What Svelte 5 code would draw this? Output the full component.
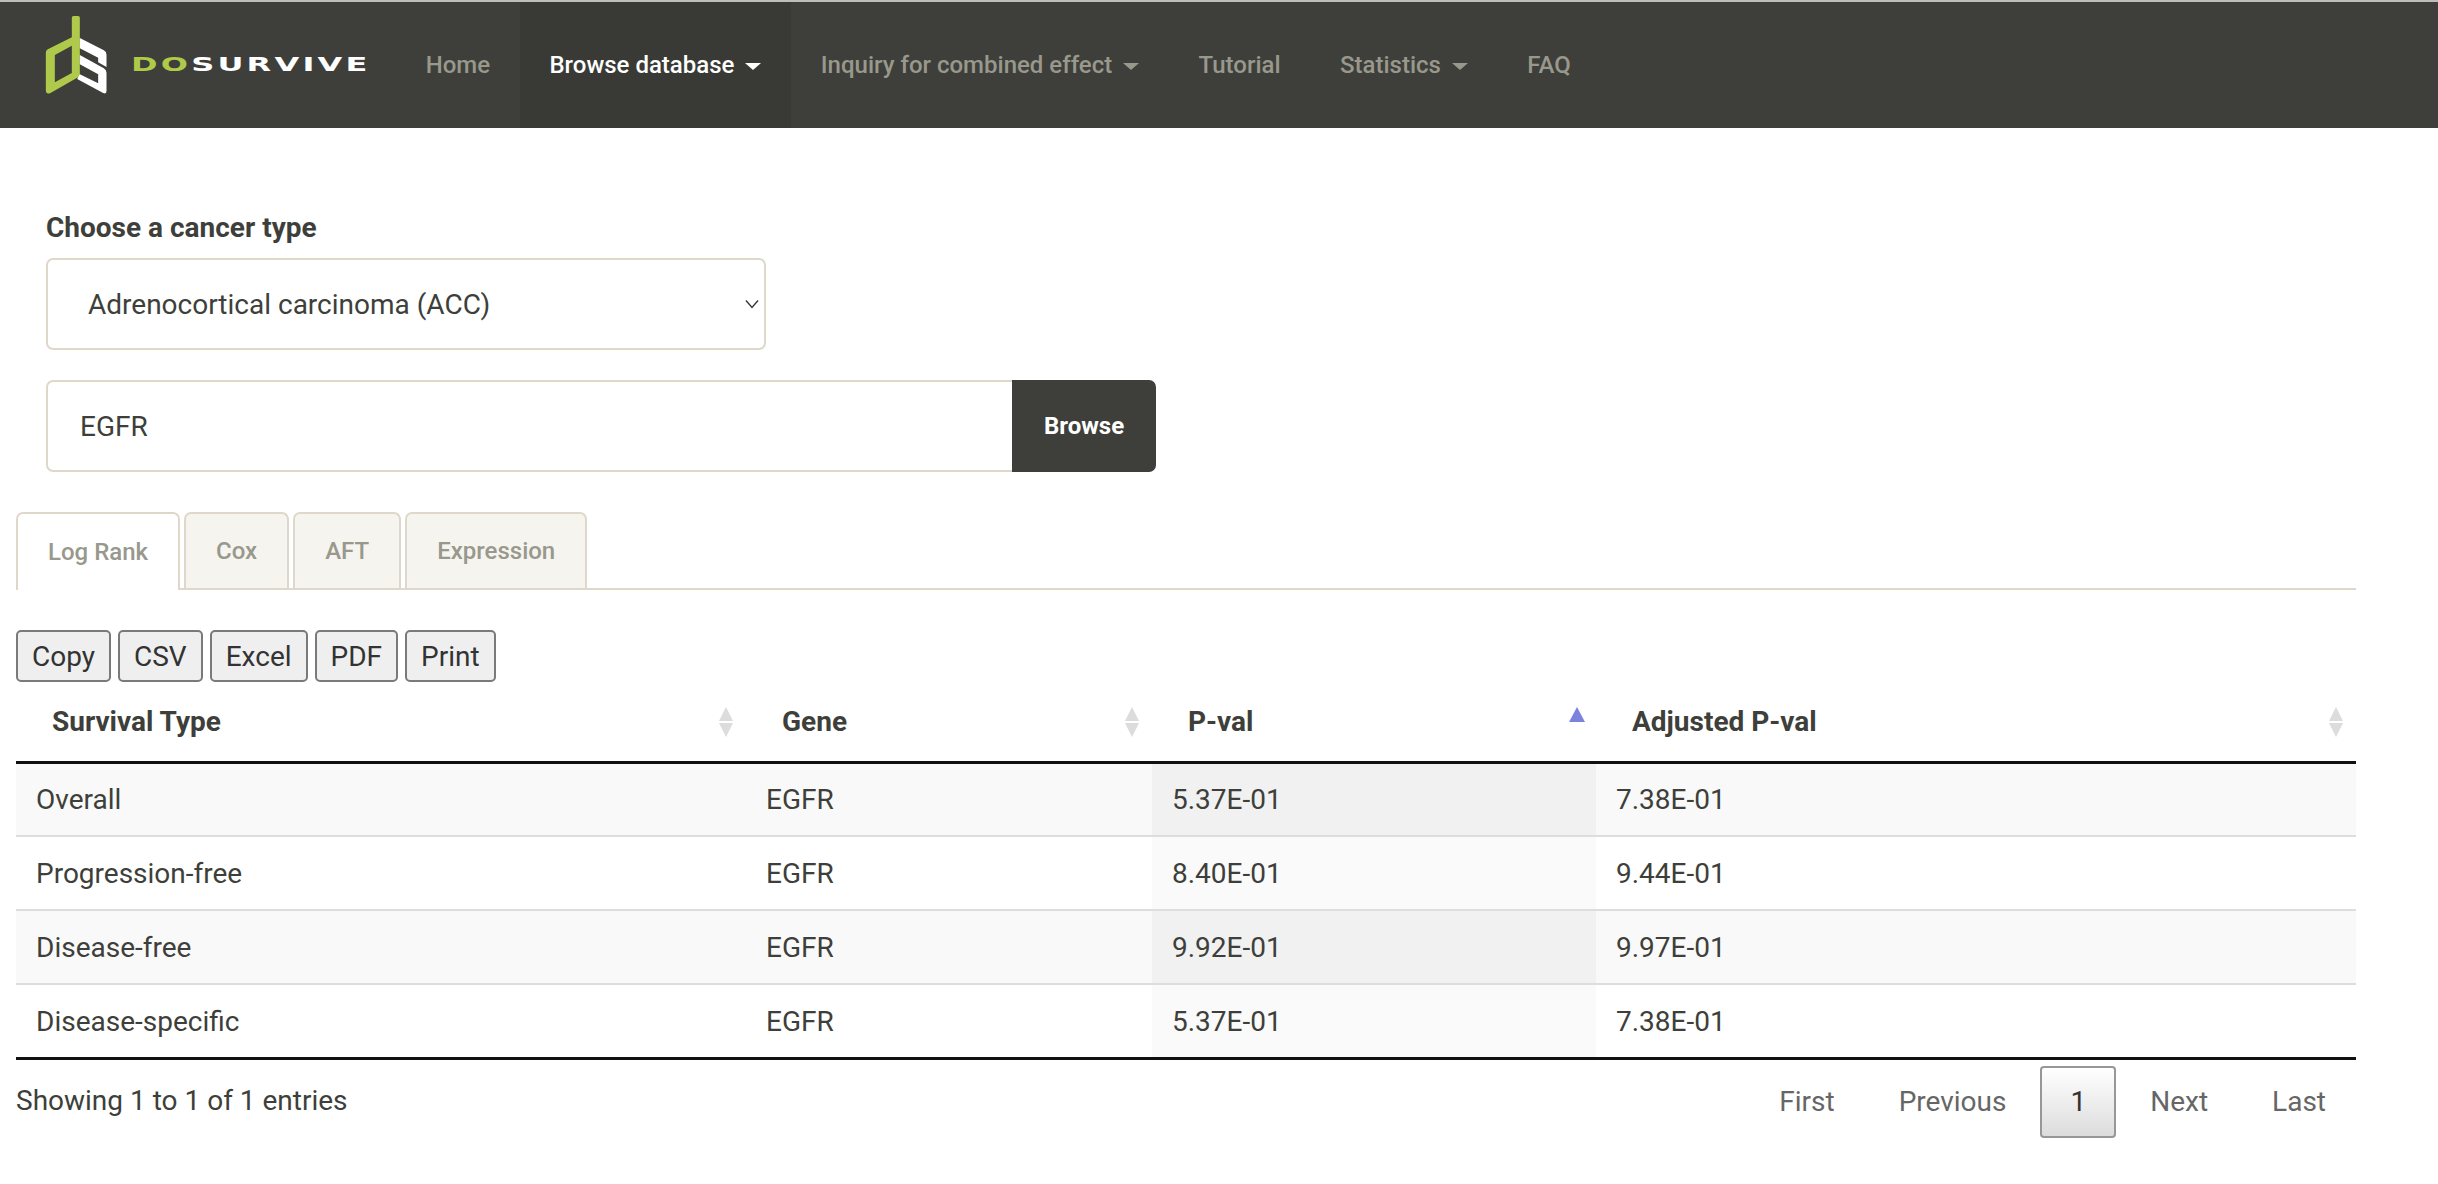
<script>
  const nav = [
    { label: 'Home' },
    { label: 'Browse database', caret: true, active: true },
    { label: 'Inquiry for combined effect', caret: true },
    { label: 'Tutorial' },
    { label: 'Statistics', caret: true },
    { label: 'FAQ' }
  ];
  const tabs = ['Log Rank', 'Cox', 'AFT', 'Expression'];
  const exportButtons = ['Copy', 'CSV', 'Excel', 'PDF', 'Print'];
  const rows = [
    ['Overall', 'EGFR', '5.37E-01', '7.38E-01'],
    ['Progression-free', 'EGFR', '8.40E-01', '9.44E-01'],
    ['Disease-free', 'EGFR', '9.92E-01', '9.97E-01'],
    ['Disease-specific', 'EGFR', '5.37E-01', '7.38E-01']
  ];
  const columns = ['Survival Type', 'Gene', 'P-val', 'Adjusted P-val'];
</script>

<nav class="navbar">
  <a class="brand" href="#top">
    <svg class="mark" viewBox="70 30 200 240" aria-hidden="true">
      <path fill="#afc94a" fill-rule="evenodd" d="M156 38 Q156 33 161 33 H175 Q180 33 180 38 V214 L92 264 Q78 270 78 255 V143 Q78 136 84 133 L156 97 Z M105 150 V232 L156 204 V122 Z" />
      <path fill="#fff" d="M180 99 L252 136 Q260 140 260 149 V186 L235 172 V158 L180 130 V150 L252 190 Q260 195 260 203 V258 Q260 268 250 264 L172 222 L180 208 L235 235 V208 L180 178 Z" />
    </svg>
    <span class="wordmark"><b>DO</b>SURVIVE</span>
  </a>
  <ul class="links">
    {#each nav as item}
      <li class:active={item.active}>
        <a href="#top">{item.label}{#if item.caret}<i class="caret"></i>{/if}</a>
      </li>
    {/each}
  </ul>
</nav>

<main>
  <section class="filters">
    <label for="cancer">Choose a cancer type</label>
    <div class="select">
      <span>Adrenocortical carcinoma (ACC)</span>
      <svg viewBox="0 0 14 10" aria-hidden="true"><path d="M1 1.5 L7 8.5 L13 1.5" fill="none" stroke="#333" stroke-width="1.3" /></svg>
    </div>
    <div class="search">
      <input id="cancer" value="EGFR" />
      <button>Browse</button>
    </div>
  </section>

  <ul class="tabs">
    {#each tabs as tab, i}
      <li class:current={i === 0}>{tab}</li>
    {/each}
  </ul>

  <div class="exports">
    {#each exportButtons as b}
      <button>{b}</button>
    {/each}
  </div>

  <table>
    <colgroup>
      <col style="width: 730px" />
      <col style="width: 406px" />
      <col style="width: 444px" />
      <col />
    </colgroup>
    <thead>
      <tr>
        {#each columns as c, i}
          <th>
            {c}
            {#if i === 2}
              <i class="sort up-only"></i>
            {:else}
              <i class="sort"></i>
            {/if}
          </th>
        {/each}
      </tr>
    </thead>
    <tbody>
      {#each rows as row, r}
        <tr class:odd={r % 2 === 0}>
          {#each row as cell, i}
            <td class:sorted={i === 2}>{cell}</td>
          {/each}
        </tr>
      {/each}
    </tbody>
  </table>

  <div class="foot">
    <span class="info">Showing 1 to 1 of 1 entries</span>
    <div class="pager">
      <a href="#top">First</a>
      <a href="#top">Previous</a>
      <a href="#top" class="on">1</a>
      <a href="#top">Next</a>
      <a href="#top">Last</a>
    </div>
  </div>
</main>

<style>
  :global(body) {
    font-family: Roboto, sans-serif;
    color: #3e3f3a;
    background: #fff;
  }
  .navbar {
    display: flex;
    align-items: center;
    height: 126px;
    background: #3e3f3a;
    border-top: 2px solid #bdbdbb;
  }
  .brand {
    display: flex;
    align-items: center;
    margin-left: 43px;
    width: 353px;
    height: 100%;
    text-decoration: none;
  }
  .mark {
    width: 67px;
    height: 80px;
    margin-bottom: 20px;
    flex: none;
  }
  .wordmark {
    display: inline-block;
    margin-left: 21px;
    margin-top: -2px;
    font: 700 20px "DejaVu Sans", sans-serif;
    letter-spacing: 2px;
    color: #fff;
    white-space: nowrap;
    transform: scaleX(1.6);
    transform-origin: left center;
  }
  .wordmark b {
    color: #afc94a;
  }
  .links {
    display: flex;
    height: 100%;
    margin: 0;
    padding: 0;
    list-style: none;
  }
  .links li {
    display: flex;
    align-items: center;
    padding: 0 29.7px;
  }
  .links li.active {
    background: #393a35;
  }
  .links a {
    font-size: 24px;
    font-weight: 500;
    color: #98988d;
    text-decoration: none;
    white-space: nowrap;
  }
  .links .active a {
    color: #fff;
  }
  .caret {
    display: inline-block;
    margin-left: 11px;
    vertical-align: 3px;
    border-top: 7px solid currentColor;
    border-left: 8px solid transparent;
    border-right: 8px solid transparent;
  }
  main {
    padding: 0 82px 0 16px;
  }
  .filters {
    padding: 81px 0 0 30px;
  }
  label {
    display: block;
    font-size: 28px;
    font-weight: 700;
    line-height: 38px;
    margin-bottom: 11px;
  }
  .select {
    box-sizing: border-box;
    display: flex;
    align-items: center;
    justify-content: space-between;
    width: 720px;
    height: 92px;
    padding: 0 5px 0 40px;
    border: 2px solid #dfd7ca;
    border-radius: 7px;
    font-size: 28px;
  }
  .select svg {
    width: 14px;
    height: 10px;
  }
  .search {
    display: flex;
    width: 1110px;
    height: 92px;
    margin-top: 30px;
  }
  .search input {
    box-sizing: border-box;
    flex: 1;
    min-width: 0;
    padding: 0 32px;
    border: 2px solid #dfd7ca;
    border-right: 0;
    border-radius: 7px 0 0 7px;
    font: 400 28px Roboto, sans-serif;
    color: #3e3f3a;
    outline: 0;
  }
  .search button {
    width: 144px;
    border: 0;
    border-radius: 0 7px 7px 0;
    background: #3e3f3a;
    color: #fff;
    font: 700 24px Roboto, sans-serif;
  }
  .tabs {
    display: flex;
    gap: 4px;
    height: 76px;
    margin: 40px 0 0;
    padding: 0;
    list-style: none;
    border-bottom: 2px solid #dfd7ca;
  }
  .tabs li {
    display: flex;
    align-items: center;
    height: 76px;
    padding: 0 30px;
    box-sizing: border-box;
    font-size: 24px;
    font-weight: 500;
    color: #98988d;
    background: #f5f4ef;
    border: 2px solid #dfd7ca;
    border-bottom: 0;
    border-radius: 7px 7px 0 0;
  }
  .tabs li.current {
    height: 78px;
    background: #fff;
  }
  .exports {
    display: flex;
    gap: 7px;
    margin-top: 40px;
  }
  .exports button {
    height: 52px;
    padding: 0 14px;
    border: 2px solid #7a7a7a;
    border-radius: 5px;
    background: #efefef;
    color: #333;
    font: 400 28px Roboto, sans-serif;
  }
  table {
    width: 100%;
    table-layout: fixed;
    border-collapse: separate;
    border-spacing: 0;
    font-size: 28px;
  }
  th {
    position: relative;
    height: 82px;
    box-sizing: border-box;
    padding: 0 0 0 36px;
    text-align: left;
    font-size: 28px;
    font-weight: 700;
    border-bottom: 3px solid #111;
  }
  td {
    height: 74px;
    box-sizing: border-box;
    padding: 0 20px;
    border-top: 2px solid #ddd;
  }
  tbody tr:first-child td {
    border-top: 0;
    height: 71px;
  }
  tbody tr:last-child td {
    border-bottom: 3px solid #111;
    height: 77px;
  }
  tr.odd td {
    background: #f9f9f9;
  }
  td.sorted {
    background: #fafafa;
  }
  tr.odd td.sorted {
    background: #f1f1f1;
  }
  .sort {
    position: absolute;
    right: 12px;
    top: 25px;
    width: 15px;
    height: 30px;
  }
  .sort::before,
  .sort::after {
    content: '';
    position: absolute;
    left: 0;
    border-left: 7.5px solid transparent;
    border-right: 7.5px solid transparent;
  }
  .sort::before {
    top: 0;
    border-bottom: 14px solid #dcdcdc;
  }
  .sort::after {
    bottom: 0;
    border-top: 14px solid #dcdcdc;
  }
  .sort.up-only::after {
    display: none;
  }
  .sort.up-only::before {
    border-left-width: 8px;
    border-right-width: 8px;
    border-bottom: 15px solid #7b83dc;
  }
  .foot {
    display: flex;
    justify-content: space-between;
    align-items: flex-start;
    margin-top: 6px;
  }
  .info {
    font-size: 28px;
    line-height: 69px;
  }
  .pager {
    display: flex;
    align-items: center;
    gap: 4px;
  }
  .pager a {
    box-sizing: border-box;
    height: 72px;
    padding: 0 30px;
    font-size: 28px;
    line-height: 72px;
    color: #666;
    text-decoration: none;
  }
  .pager a.on {
    padding: 0 28px;
    color: #333;
    border: 2px solid #979797;
    border-radius: 4px;
    background: linear-gradient(#fff, #dcdcdc);
    line-height: 68px;
  }
</style>
